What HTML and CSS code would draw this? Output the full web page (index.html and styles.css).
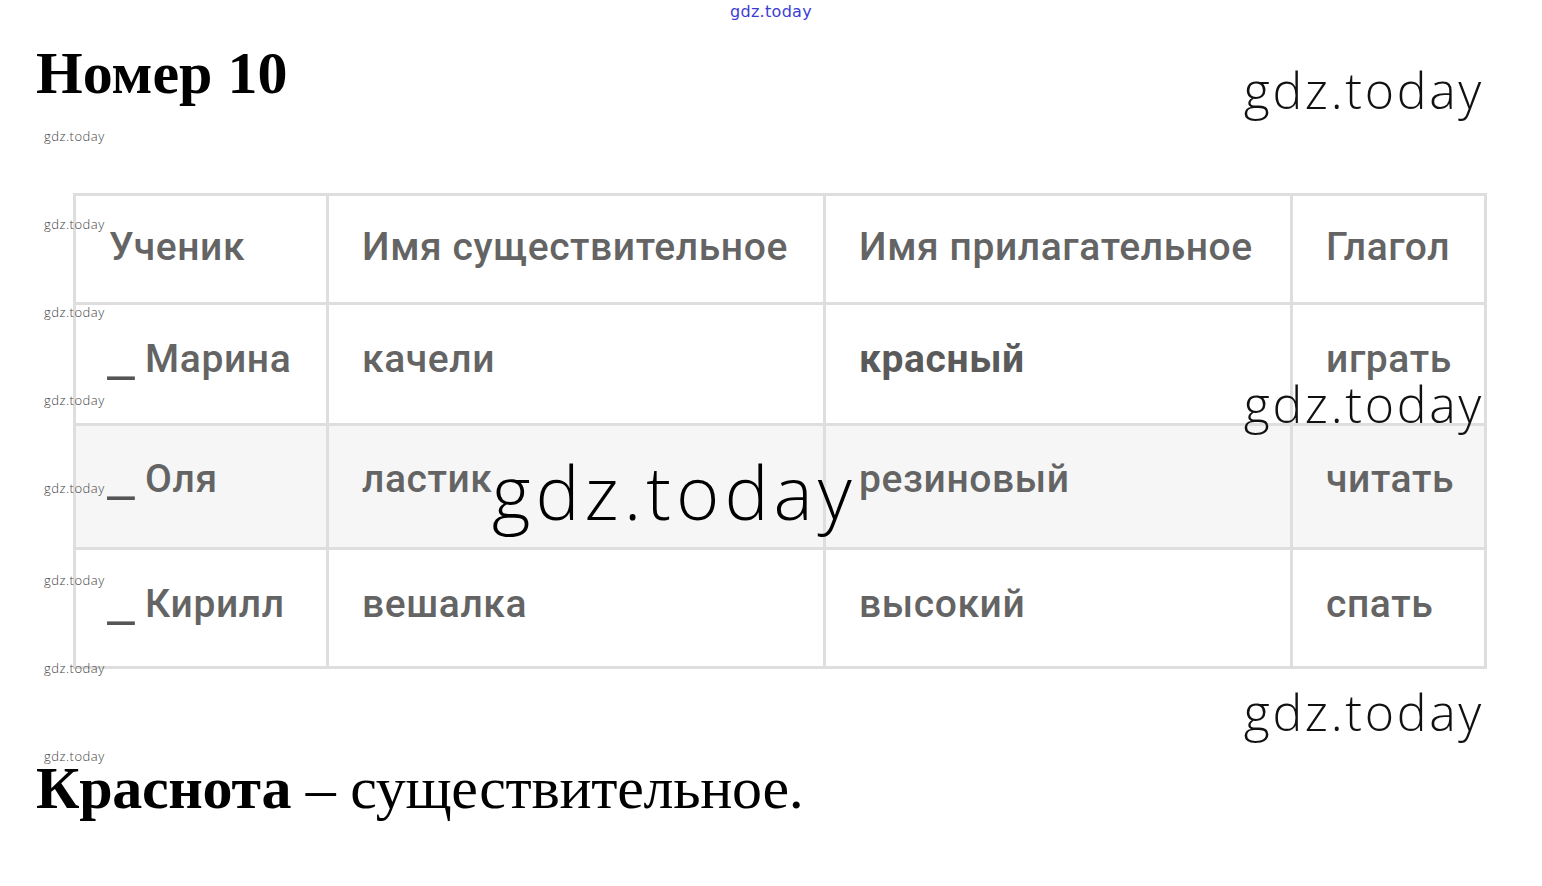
FILE: index.html
```html
<!DOCTYPE html>
<html lang="ru">
<head>
<meta charset="utf-8">
<link rel="stylesheet" href="styles.css">
</head>
<body>
<div class="page">
  <div class="wm-top">gdz.today</div>
  <h1 class="title">Номер 10</h1>
  <div class="words">
    <div class="cell head">Ученик</div>
    <div class="cell head">Имя существительное</div>
    <div class="cell head">Имя прилагательное</div>
    <div class="cell head">Глагол</div>

    <div class="cell r1"><span class="us">_</span>Марина</div>
    <div class="cell r1">качели</div>
    <div class="cell r1 strong">красный</div>
    <div class="cell r1">играть</div>

    <div class="cell r2 shaded"><span class="us">_</span>Оля</div>
    <div class="cell r2 shaded">ластик</div>
    <div class="cell r2 shaded">резиновый</div>
    <div class="cell r2 shaded">читать</div>

    <div class="cell r3"><span class="us">_</span>Кирилл</div>
    <div class="cell r3">вешалка</div>
    <div class="cell r3">высокий</div>
    <div class="cell r3">спать</div>
  </div>
  <p class="answer"><b>Краснота</b> – существительное.</p>

  <div class="wm-small s1">gdz.today</div>
  <div class="wm-small s2">gdz.today</div>
  <div class="wm-small s3">gdz.today</div>
  <div class="wm-small s4">gdz.today</div>
  <div class="wm-small s5">gdz.today</div>
  <div class="wm-small s6">gdz.today</div>
  <div class="wm-small s7">gdz.today</div>
  <div class="wm-small s8">gdz.today</div>

  <div class="wm-big b1">gdz.today</div>
  <div class="wm-big b2">gdz.today</div>
  <div class="wm-big b3">gdz.today</div>
  <div class="wm-center">gdz.today</div>
</div>
</body>
</html>
```

FILE: styles.css
```css
html, body {
  margin: 0;
  padding: 0;
  background: #fff;
}
.page {
  position: relative;
  width: 1542px;
  height: 886px;
  overflow: hidden;
  padding: 0 0 0 36px;
  box-sizing: border-box;
  display: flex;
  flex-direction: column;
  align-items: flex-start;
}
.title {
  margin: 38px 0 0 0;
  font-family: "Liberation Serif", serif;
  font-weight: bold;
  font-size: 60px;
  line-height: 70px;
  color: #000;
}
.words {
  margin-top: 85px;
  margin-left: 37px;
  display: grid;
  grid-template-columns: 250px 494px 464px 191px;
  grid-template-rows: 106px 118px 121px 116px;
  gap: 3px;
  padding: 3px;
  background: #dedede;
  font-family: Roboto, "Liberation Sans", sans-serif;
  font-size: 39px;
  letter-spacing: 0.6px;
  line-height: 46px;
  font-weight: 500;
  color: #646464;
}
.cell {
  background: #fff;
  padding-left: 33px;
  white-space: nowrap;
  box-sizing: border-box;
}
.cell.head { padding-top: 28px; }
.cell.r1 { padding-top: 31px; }
.cell.r2 { padding-top: 30px; }
.cell.r3 { padding-top: 31px; }
.cell.shaded { background: #f6f6f6; }
.cell.strong { font-weight: 700; color: #5a5a5a; }
.us {
  display: inline-block;
  position: relative;
  top: 4px;
  transform: scaleX(1.6);
  transform-origin: left center;
  margin-left: -2px;
  margin-right: 20px;
  color: #555;
}
.answer {
  margin: 84px 0 0 0;
  font-family: "Liberation Serif", serif;
  font-size: 60px;
  line-height: 70px;
  letter-spacing: -0.3px;
  color: #000;
}
.wm-top {
  position: absolute;
  left: 730px;
  top: 2px;
  font-family: "DejaVu Sans", sans-serif;
  font-weight: normal;
  font-size: 16px;
  color: #3c3cd4;
  letter-spacing: 0.3px;
}
.wm-small {
  position: absolute;
  left: 44px;
  font-family: "Open Sans", sans-serif;
  font-weight: 300;
  font-size: 13px;
  letter-spacing: 0.5px;
  color: #444;
  line-height: 16px;
}
.s1 { top: 128px; }
.s2 { top: 216px; }
.s3 { top: 304px; }
.s4 { top: 392px; }
.s5 { top: 480px; }
.s6 { top: 572px; }
.s7 { top: 660px; }
.s8 { top: 748px; }
.wm-big {
  position: absolute;
  right: 58px;
  font-family: "Open Sans", sans-serif;
  font-weight: 300;
  font-size: 50px;
  letter-spacing: 2.7px;
  line-height: 60px;
  color: #111;
}
.b1 { top: 60px; }
.b2 { top: 374px; }
.b3 { top: 682px; }
.wm-center {
  position: absolute;
  left: 492px;
  top: 447px;
  font-family: "Open Sans", sans-serif;
  font-weight: 300;
  font-size: 74px;
  letter-spacing: 5px;
  line-height: 90px;
  color: #000;
}
```
